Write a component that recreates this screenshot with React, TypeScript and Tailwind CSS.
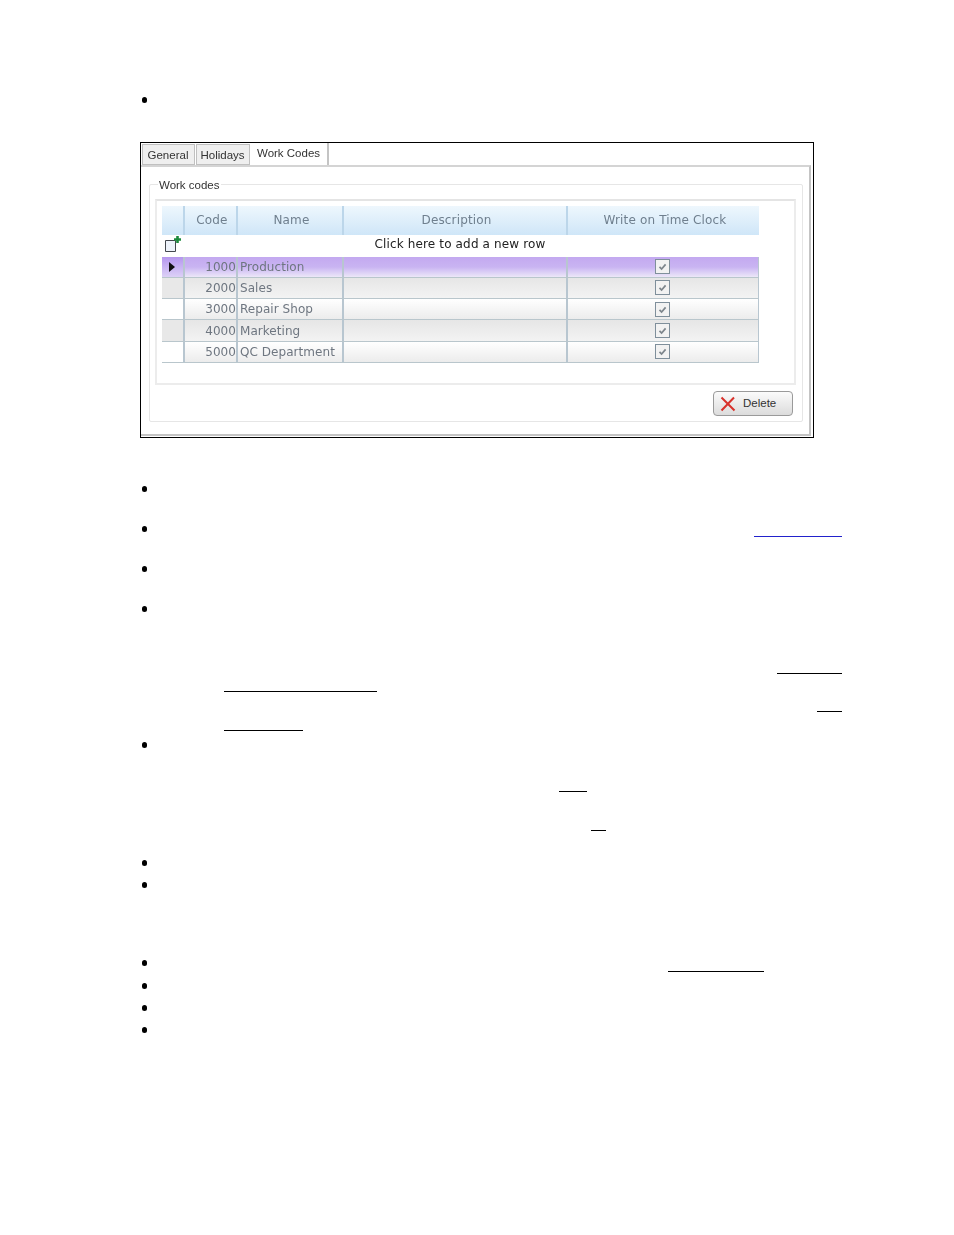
const rows = [
  { code: "1000", name: "Production", tone: "sel" },
  { code: "2000", name: "Sales", tone: "alt" },
  { code: "3000", name: "Repair Shop", tone: "plain" },
  { code: "4000", name: "Marketing", tone: "alt" },
  { code: "5000", name: "QC Department", tone: "plain" },
];

const cols = "grid w-[597px] grid-cols-[23px_53px_106px_224px_191px]";
const gridFont = "font-['DejaVu_Sans',sans-serif] text-[12px] tracking-[0.15px]";
const rowFont = "font-['DejaVu_Sans',sans-serif] text-[12px] tracking-[0.05px]";

function Bullet() {
  return <span className="w-[5px] h-[6px] rounded-full bg-black ml-[142px]" />;
}

function Tab({ label, active, w }: { label: string; active?: boolean; w: string }) {
  if (active) {
    return (
      <div className={`${w} h-[22px] -mb-px border-r-2 border-[#c4c4c4] bg-white z-10 pl-[6px] pt-[2px] text-[11.5px] text-[#333]`}>
        {label}
      </div>
    );
  }
  return (
    <div className={`${w} h-[21px] mt-px border border-[#c0c0c0] bg-[#efefef] text-center pt-[3px] pr-px text-[11.5px] leading-[14px] text-[#333]`}>
      {label}
    </div>
  );
}

function Check() {
  return (
    <span className="w-[15px] h-[15px] border border-[#7f8f9b] bg-[#f2f2f2] flex items-center justify-center">
      <svg width="11" height="11" viewBox="0 0 11 11">
        <path d="M2.5 5.8 L4.6 8 L8.6 3.4" fill="none" stroke="#7d858c" strokeWidth="1.7" />
      </svg>
    </span>
  );
}

function WorkCodes() {
  return (
    <div className="ml-[140px] w-[674px] h-[296px] border border-black bg-white flex flex-col font-['Liberation_Sans',sans-serif]">
      <div className="flex pl-px gap-px blur-[0.3px]">
        <Tab label="General" w="w-[53px]" />
        <Tab label="Holidays" w="w-[54px]" />
        <Tab label="Work Codes" w="w-[78px]" active />
      </div>
      <div className="flex-1 border-t-2 border-t-[#d4d4d4] border-r-2 border-r-[#c4c4c4] border-b-2 border-b-[#c4c4c4] mb-px mr-[2px] pl-[8px] pr-[6px] pt-[17px]">
        {/* Work codes group */}
        <div className="relative h-[238px] border border-[#e6e6e6] rounded-[2px] pl-[5px] pr-[6px] pt-[14px]">
          <span className="absolute left-[8px] -top-[7px] bg-white px-px text-[11.5px] leading-[14px] text-[#333] blur-[0.3px]">Work codes</span>
          <div className="h-[186px] border-2 border-[#ececec] border-t-[#e4e4e4] pl-[5px] pt-[5px] blur-[0.3px]">
            <div className={`${cols} h-[29px] ${gridFont} text-[#6f7f8e]`}>
              {["", "Code", "Name", "Description", "Write on Time Clock"].map((h, i) => (
                <div
                  key={i}
                  className={`flex items-center justify-center pb-[2px] bg-gradient-to-b from-[#eef7fd] to-[#cfe6f8] ${i < 4 ? "border-r-2 border-[#bcd6ea]" : ""} ${i > 0 ? "pl-[3px]" : ""}`}
                >
                  {h}
                </div>
              ))}
            </div>
            <div className="relative w-[597px] h-[21.5px] flex items-center justify-center pb-[3px] text-[#222]">
              <svg className="absolute left-[2px] top-0" width="18" height="18" viewBox="0 0 18 18">
                <path d="M1.5 5.5 H11.5 V16.5 H1.5 Z" fill="#eef3fb" stroke="#44484f" strokeWidth="1" />
                <path d="M13.5 1 V8 M10 4.5 H17" stroke="#1c8a3c" strokeWidth="2.6" />
              </svg>
              <span className={`${gridFont} pr-[1px]`}>Click here to add a new row</span>
            </div>
            {rows.map((r, i) => (
              <div
                key={r.code}
                className={`${cols} h-[21.3px] ${rowFont} text-[#6e7680] border-b border-[#b9c6cc] ${
                  r.tone === "sel"
                    ? "bg-gradient-to-b from-[#c3a9f0] via-[#c9b4f2] to-[#ece7f8]"
                    : r.tone === "alt"
                    ? "bg-gradient-to-b from-[#e6e6e6] to-[#f3f3f3]"
                    : "bg-gradient-to-b from-[#ffffff] to-[#ececec]"
                }`}
              >
                <div
                  className={`flex items-center justify-center border-r-2 border-[#b8c6d0] ${
                    r.tone === "sel" ? "bg-gradient-to-b from-[#b596ee] to-[#dcd0f6]" : i % 2 === 1 ? "bg-[#e8e8e8]" : "bg-white"
                  }`}
                >
                  {r.tone === "sel" && (
                    <svg width="8" height="10" viewBox="0 0 8 10" className="mr-[2px]">
                      <path d="M1 0 L7 5 L1 10 Z" fill="#111" />
                    </svg>
                  )}
                </div>
                <div className="flex items-center justify-end border-r-2 border-[#b8c6d0]">{r.code}</div>
                <div className="flex items-center pl-[2px] border-r-2 border-[#b8c6d0]">{r.name}</div>
                <div className="border-r-2 border-[#b8c6d0]" />
                <div className="flex items-center justify-center border-r border-[#b8c6d0] pr-[1px]">
                  <Check />
                </div>
              </div>
            ))}
          </div>
          <div className="flex justify-end mt-[6px] pr-[3px]">
            <button className="w-[80px] h-[25px] border border-[#9a9a9a] rounded-[4px] bg-gradient-to-b from-[#fbfbfb] to-[#dcdcdc] flex items-center pl-[6px] gap-[7px] text-[11.5px] text-[#333]">
              <svg width="16" height="16" viewBox="0 0 16 16">
                <path d="M1.5 1.5 L14.5 14.5 M14 1.5 L1.5 14.5" stroke="#d8322c" strokeWidth="2" />
              </svg>
              <span className="pt-px">Delete</span>
            </button>
          </div>
        </div>
      </div>
    </div>
  );
}

function Line({ h, bullet, children }: { h: string; bullet?: boolean; children?: React.ReactNode }) {
  return (
    <div className={`${h} flex items-start relative`}>
      {bullet && <Bullet />}
      {children}
    </div>
  );
}

function Rule({ ml, w, mt, color = "bg-black" }: { ml: string; w: string; mt: string; color?: string }) {
  return <span className={`${ml} ${w} ${mt} h-px ${color}`} />;
}

export default function App() {
  return (
    <div className="w-[954px] h-[1235px] bg-white overflow-hidden pt-[97px]">
      <Line h="h-[45px]" bullet />
      <WorkCodes />
      <div className="pt-[48px]">
        <Line h="h-[40px]" bullet />
        <Line h="h-[40px]" bullet>
          <Rule ml="ml-[607px]" w="w-[88px]" mt="mt-[10px]" color="bg-[#2222cc]" />
        </Line>
        <Line h="h-[40px]" bullet />
        <Line h="h-[61px]" bullet />
        <Line h="h-[18px]">
          <Rule ml="ml-[777px]" w="w-[65px]" mt="mt-[6px]" />
        </Line>
        <Line h="h-[20px]">
          <Rule ml="ml-[224px]" w="w-[153px]" mt="mt-[6px]" />
        </Line>
        <Line h="h-[19px]">
          <Rule ml="ml-[817px]" w="w-[25px]" mt="mt-[6px]" />
        </Line>
        <Line h="h-[18px]">
          <Rule ml="ml-[224px]" w="w-[79px]" mt="mt-[6px]" />
        </Line>
        <Line h="h-[42px]" bullet />
        <Line h="h-[39px]">
          <Rule ml="ml-[559px]" w="w-[28px]" mt="mt-[7px]" />
        </Line>
        <Line h="h-[37px]">
          <Rule ml="ml-[591px]" w="w-[15px]" mt="mt-[7px]" />
        </Line>
        <Line h="h-[22px]" bullet />
        <Line h="h-[78px]" bullet />
        <Line h="h-[23px]" bullet>
          <Rule ml="ml-[521px]" w="w-[96px]" mt="mt-[11px]" />
        </Line>
        <Line h="h-[22px]" bullet />
        <Line h="h-[22px]" bullet />
        <Line h="h-[22px]" bullet />
      </div>
    </div>
  );
}
